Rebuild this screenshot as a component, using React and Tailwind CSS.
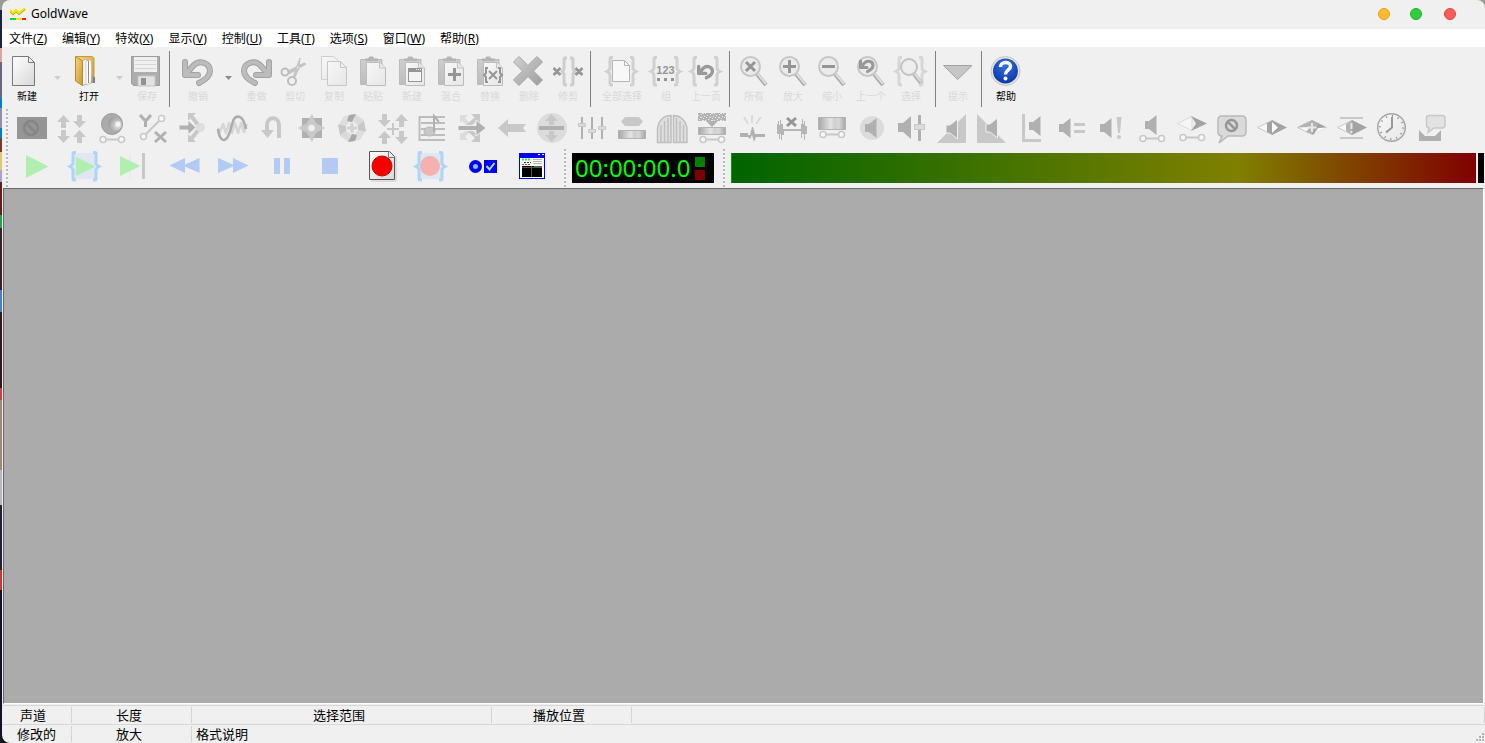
import React from "react";

const LIGHT = "#c8c8c8";
const MID = "#b0b0b0";
const DARK = "#959595";

const Icon = ({ children }) => (
  <svg width="32" height="32" viewBox="0 0 32 32" fill="none" className="shrink-0 overflow-visible" aria-hidden="true">
    {children}
  </svg>
);

// shared gradients, referenced by id from every icon
const Gradients = () => (
  <svg className="absolute w-0 h-0" aria-hidden="true">
    <defs>
      <linearGradient id="paper" x1="0" y1="0" x2="1" y2="1">
        <stop offset="0" stopColor="#fff" />
        <stop offset="1" stopColor="#d8d8d8" />
      </linearGradient>
      <linearGradient id="pale" x1="0" y1="0" x2="1" y2="1">
        <stop offset="0" stopColor="#f8f8f8" />
        <stop offset="1" stopColor="#e6e6e6" />
      </linearGradient>
      <linearGradient id="board" x1="0" y1="0" x2="0" y2="1">
        <stop offset="0" stopColor="#cecece" />
        <stop offset="1" stopColor="#bdbdbd" />
      </linearGradient>
      <linearGradient id="steel" x1="0" y1="0" x2="1" y2="0">
        <stop offset="0" stopColor="#a6a6a6" />
        <stop offset="0.45" stopColor="#e4e4e4" />
        <stop offset="0.6" stopColor="#cfcfcf" />
        <stop offset="0.75" stopColor="#d8d8d8" />
        <stop offset="1" stopColor="#a6a6a6" />
      </linearGradient>
      <linearGradient id="metal" x1="0" y1="0" x2="1" y2="1">
        <stop offset="0" stopColor="#d2d2d2" />
        <stop offset="1" stopColor="#9c9c9c" />
      </linearGradient>
      <linearGradient id="gold" x1="0" y1="0" x2="1" y2="1">
        <stop offset="0" stopColor="#f7d983" />
        <stop offset="1" stopColor="#c9952b" />
      </linearGradient>
      <radialGradient id="blue" cx="0.5" cy="0.3" r="0.8">
        <stop offset="0" stopColor="#2f70e8" />
        <stop offset="1" stopColor="#0a2f9c" />
      </radialGradient>
      <radialGradient id="ball" cx="0.7" cy="0.6" r="0.7">
        <stop offset="0" stopColor="#efefef" />
        <stop offset="0.45" stopColor="#c4c4c4" />
        <stop offset="1" stopColor="#9b9b9b" />
      </radialGradient>
      <pattern id="noise" width="9" height="7" patternUnits="userSpaceOnUse">
        <rect width="9" height="7" fill="#b4b4b4" />
        <path d="M0 1.500h1M3 0.500h1M6 1.500h2M2 3.500h1M5 2.500h1M8 4.500h1M1 5.500h1M4 5.500h2M7 6.500h1" stroke="#e8e8e8" />
      </pattern>
    </defs>
  </svg>
);

const Curl = ({ fill = "#bcbcbc", edge = "#a2a2a2" }) => (
  <g strokeLinecap="round" strokeLinejoin="round">
    <path d="M3 6V19H16M4 18L11 10C17 3 28 7 28 15C28 20 23 24 17 27" stroke={edge} strokeWidth="6" />
    <path d="M3 6V19H16M4 18L11 10C17 3 28 7 28 15C28 20 23 24 17 27" stroke={fill} strokeWidth="4" />
  </g>
);

const SmallCurl = () => <Curl fill="#9a9a9a" edge="#929292" />;

const Braces = ({ color = "#d0d0d0" }) => (
  <g stroke={color} strokeWidth="3">
    <path d="M7 1.500H5Q4 1.500 4 3V12Q4 14 1 15.500Q4 17 4 19V27Q4 29 5 29H7" />
    <path d="M24 1.500H26Q27 1.500 27 3V12Q27 14 30 15.500Q27 17 27 19V27Q27 29 26 29H24" />
  </g>
);

const Clipboard = ({ children }) => (
  <Icon>
    <path d="M3.500 3.500H25V28.500H3.500Z" fill="url(#board)" stroke="#bbb" />
    <path d="M8 5V2.500H11L12.500 0.500H16L17.500 2.500H21V5Z" fill="#b5b5b5" />
    <path d="M9.500 6.500H23L28.500 12V29.500H9.500Z" fill="url(#pale)" stroke="#bcbcbc" />
    <path d="M22.500 6.500V12H28.500" fill="#e9e9e9" stroke="#c2c2c2" />
    {children}
  </Icon>
);

const Lens = ({ children }) => (
  <Icon>
    <path d="M19 18L28 29" stroke="#a9a9a9" strokeWidth="4" />
    <path d="M19 17L28 28" stroke="#dedede" strokeWidth="2" />
    <circle cx="12.500" cy="10.500" r="9.500" fill="#ebebeb" stroke="#c6c6c6" strokeWidth="2" />
    {children}
  </Icon>
);

const Arrow = ({ x, y, deg = 0, fill = LIGHT }) => (
  <path d="M0 -6.500L6.500 0.500H2.500V6.500H-2.500V0.500H-6.500Z" transform={`translate(${x} ${y}) rotate(${deg})`} fill={fill} />
);

const Link = ({ y = 27.5, from = 7 }) => (
  <g stroke={LIGHT}>
    <path d={`M${from + 3} ${y}H22`} strokeWidth="2" />
    <circle cx={from} cy={y} r="3" fill="#f8f8f8" strokeWidth="1.500" />
    <circle cx="25.500" cy={y} r="3" fill="#f8f8f8" strokeWidth="1.500" />
  </g>
);

const Speaker = ({ x, y, fill = MID, edge = "none" }) => (
  <path d="M0 6H4L11.500 0V20L4 14H0Z" transform={`translate(${x} ${y})`} fill={fill} stroke={edge} />
);

const Ban = ({ x, y, r, color }) => (
  <g stroke={color} strokeWidth="2.500">
    <circle cx={x} cy={y} r={r} />
    <path d={`M${x - r * 0.7} ${y - r * 0.7}L${x + r * 0.7} ${y + r * 0.7}`} />
  </g>
);

const Diamond = ({ children }) => (
  <Icon>
    <path d="M1.500 15.500L16 8.500V22.500Z" fill="#f8f8f8" stroke="#c9c9c9" />
    <path d="M16 8L31 15.500L16 23Z" fill="#a3a3a3" />
    {children}
  </Icon>
);

const fileButtons = [
  {
    label: "新建",
    width: "w-[42px] ml-1",
    drop: true,
    icon: (
      <Icon>
        <path d="M1.500 0.500H17.500L23.500 6.500V29.500H1.500Z" fill="url(#paper)" stroke="#7a7a7a" />
        <path d="M17.500 0.500V6.500H23.500Z" fill="#eee" stroke="#7a7a7a" />
      </Icon>
    ),
  },
  {
    label: "打开",
    width: "w-[42px] ml-[2px]",
    drop: true,
    icon: (
      <Icon>
        <path d="M3 0.500H19L21 2V26L10 29Z" fill="url(#gold)" stroke="#c39a3c" />
        <path d="M9 5L14 3V28L9 29.500Z" fill="#f4f4f4" stroke="#999" strokeWidth="0.500" />
        <path d="M13 5L18 4Q19 15 18 27L13 29Z" fill="#fff" stroke="#aaa" strokeWidth="0.500" />
        <path d="M15.500 5V27" stroke="#8a8a8a" />
        <path d="M2.500 0.500L9.500 5V29.500L2.500 25Z" fill="url(#gold)" stroke="#b88a28" />
        <path d="M21 21V27" stroke="#4f8be0" strokeWidth="2" />
      </Icon>
    ),
  },
  {
    label: "保存",
    off: true,
    width: "w-[38px]",
    icon: (
      <Icon>
        <path d="M0.500 0.500H28.500V29.500H2.500L0.500 27.500Z" fill="#adadad" stroke="#9d9d9d" />
        <rect x="3" y="1" width="23" height="15" fill="#f0f0f0" />
        <path d="M4 4.500H25M4 8.500H25M4 12.500H25" stroke="#d5d5d5" />
        <rect x="7" y="20" width="17" height="10" fill="#e2e2e2" stroke="#c4c4c4" />
        <rect x="10" y="22" width="5" height="7" fill="#929292" />
      </Icon>
    ),
  },
];

const editButtons = [
  { label: "撤销", width: "w-10 ml-2", dropDark: true, icon: <Icon><Curl /></Icon> },
  {
    label: "重做",
    width: "w-[37px]",
    icon: (
      <Icon>
        <g transform="translate(31 0) scale(-1 1)"><Curl /></g>
      </Icon>
    ),
  },
  {
    label: "剪切",
    width: "w-[39px] pl-px",
    icon: (
      <Icon>
        <path d="M10 18L27 8L25 7L9 15ZM14 21L21 2L20 12L16 21Z" fill="#c4c4c4" stroke="#c4c4c4" />
        <circle cx="6" cy="16" r="3.500" stroke="#bdbdbd" strokeWidth="2" />
        <circle cx="13" cy="25" r="4" stroke="#bdbdbd" strokeWidth="2" />
      </Icon>
    ),
  },
  {
    label: "复制",
    width: "w-[39px] pl-px",
    icon: (
      <Icon>
        <path d="M3.500 0.500H16L21.500 6V23.500H3.500Z" fill="url(#pale)" stroke="#cecece" />
        <path d="M9.500 5.500H22.500L28.500 11.500V29.500H9.500Z" fill="url(#pale)" stroke="#c6c6c6" />
        <path d="M22.500 5.500V11.500H28.500" stroke="#c6c6c6" />
      </Icon>
    ),
  },
  { label: "粘贴", width: "w-[39px] pl-px", icon: <Clipboard /> },
  {
    label: "新建",
    width: "w-[39px] pl-px",
    icon: (
      <Clipboard>
        <rect x="12.500" y="12.500" width="13" height="13" fill="#f3f3f3" stroke={DARK} />
        <path d="M12 14H26" stroke={DARK} strokeWidth="4" />
        <path d="M20 13.500H21M22 13.500H23M24 13.500H25" stroke="#fff" />
      </Clipboard>
    ),
  },
  {
    label: "混合",
    width: "w-[39px] pl-px",
    icon: <Clipboard><path d="M13 18.500H26M19.500 12V25" stroke={DARK} strokeWidth="3" /></Clipboard>,
  },
  {
    label: "替换",
    width: "w-[39px] pl-px",
    icon: (
      <Clipboard>
        <path d="M14 12H12V17L10 19L12 21V26H14M24 12H26V17L28 19L26 21V26H24M15 15L23 23M23 15L15 23" stroke={DARK} strokeWidth="2" />
      </Clipboard>
    ),
  },
  {
    label: "删除",
    width: "w-[39px] pl-px",
    icon: (
      <Icon>
        <path d="M6 0.500L15 9.500L24 0.500L29.500 6L20.500 15L29.500 24L24 29.500L15 20.500L6 29.500L0.500 24L9.500 15L0.500 6Z" fill="url(#metal)" stroke="#a6a6a6" strokeLinejoin="round" />
      </Icon>
    ),
  },
  {
    label: "修剪",
    width: "w-[39px] pl-px",
    icon: (
      <Icon>
        <path d="M15 2H13Q12 2 12 4V12Q12 15 9 15.500Q12 16 12 19V27Q12 29 13 29H15M18 2H20Q21 2 21 4V12Q21 15 24 15.500Q21 16 21 19V27Q21 29 20 29H18" stroke="#cdcdcd" strokeWidth="3" />
        <path d="M1.500 12L8.500 19M8.500 12L1.500 19M23.500 12L30.500 19M30.500 12L23.500 19" stroke={DARK} strokeWidth="2.500" />
      </Icon>
    ),
  },
];

const selectButtons = [
  {
    label: "全部选择",
    width: "w-[54px] ml-1",
    icon: (
      <Icon>
        <Braces />
        <path d="M6.500 4.500H18.500L23.500 9.500V25.500H6.500Z" fill="#f8f8f8" stroke="#b5b5b5" />
        <path d="M18.500 4.500V9.500H23.500" stroke="#b5b5b5" />
      </Icon>
    ),
  },
  {
    label: "组",
    width: "w-[34px]",
    icon: (
      <Icon>
        <Braces />
        <text x="15.500" y="17.500" textAnchor="middle" fontSize="11" fontWeight="700" fontFamily="Liberation Sans, sans-serif" fill={DARK}>123</text>
        <path d="M7 23.500H10M14 23.500H17M21 23.500H24" stroke={DARK} strokeWidth="3" />
      </Icon>
    ),
  },
  {
    label: "上一页",
    width: "w-[46px]",
    icon: <Icon><Braces /><g transform="translate(7 7) scale(0.550)"><SmallCurl /></g></Icon>,
  },
];

const zoomButtons = [
  {
    label: "所有",
    width: "w-[39px] ml-1 pl-px",
    icon: <Lens><path d="M8 6L17 15M17 6L8 15" stroke={DARK} strokeWidth="3" /></Lens>,
  },
  {
    label: "放大",
    width: "w-[39px] pl-px",
    icon: <Lens><path d="M6 10.500H19M12.500 4V17" stroke={DARK} strokeWidth="3" /></Lens>,
  },
  {
    label: "缩小",
    width: "w-[39px] pl-px",
    icon: <Lens><path d="M6 10.500H19" stroke={DARK} strokeWidth="3" /></Lens>,
  },
  {
    label: "上一个",
    width: "w-10",
    icon: <Lens><g transform="translate(4 2) scale(0.500)"><SmallCurl /></g></Lens>,
  },
  {
    label: "选择",
    width: "w-10",
    icon: (
      <Icon>
        <Braces color="#d6d6d6" />
        <path d="M19 18L26 27" stroke="#b0b0b0" strokeWidth="4" />
        <path d="M19 17L26 26" stroke="#dedede" strokeWidth="2" />
        <circle cx="14" cy="11" r="8" fill="#eee" stroke="#c2c2c2" strokeWidth="2" />
      </Icon>
    ),
  },
];

const cueButtons = [
  {
    label: "提示",
    width: "w-[38px] mx-[3px]",
    icon: <Icon><path d="M1.500 9.500H30L15.700 23.500Z" fill="#c6c6c6" stroke="#a2a2a2" /></Icon>,
  },
];

const helpButtons = [
  {
    label: "帮助",
    on: true,
    width: "w-10 ml-1",
    icon: (
      <Icon>
        <circle cx="15.500" cy="15" r="14.500" fill="#e6e6e6" stroke="#c4c4c4" />
        <circle cx="15.500" cy="15" r="12.500" fill="url(#blue)" />
        <path d="M10.500 11C10.500 5 20.500 5 20.500 10.500C20.500 14 15.500 14 15.500 18.500" stroke="#fff" strokeWidth="3.500" />
        <circle cx="15.500" cy="22.500" r="2" fill="#fff" />
      </Icon>
    ),
  },
];

const effects = [
  ["禁用", <Icon><rect x="1" y="5" width="30" height="22" fill="#959595" /><Ban x={15} y={16} r={7} color="#868686" /></Icon>],
  ["偏移", <Icon><Arrow x={7.5} y={9.5} /><Arrow x={7.5} y={24.5} deg={180} /><Arrow x={23.5} y={9.5} deg={180} /><Arrow x={23.5} y={24.5} /></Icon>],
  ["多普勒", <Icon><circle cx="16" cy="12" r="10.500" fill="#ababab" stroke="#9b9b9b" /><circle cx="19" cy="12" r="7" fill="url(#ball)" /><circle cx="22" cy="12" r="2.500" fill="#f6f6f6" /><Link /></Icon>],
  [
    "表达式",
    <Icon>
      <path d="M10 22L23 9" stroke={LIGHT} strokeWidth="2" />
      <circle cx="25.500" cy="6.500" r="3" fill="#f8f8f8" stroke={LIGHT} strokeWidth="1.500" />
      <circle cx="7.500" cy="24.500" r="3" fill="#f8f8f8" stroke={LIGHT} strokeWidth="1.500" />
      <path d="M4 3L9.500 9L15 3M9.500 8V15M19 20L30 30M30 20L19 30" stroke={MID} strokeWidth="3" />
    </Icon>,
  ],
  [
    "回声",
    <Icon>
      <path d="M24 15L15 4M24 16L15 27" stroke={LIGHT} strokeWidth="4" />
      <path d="M12 1H20L12 9ZM12 30H20L12 22Z" fill={LIGHT} />
      <circle cx="24.500" cy="15.500" r="4.500" fill="#dedede" />
      <path d="M3 13H12V8L20 15.500L12 23V18H3Z" fill={MID} stroke="#f0f0f0" />
    </Icon>,
  ],
  [
    "滤波",
    <Icon>
      <path d="M2 16L4 20L7 12L10 21L13 11L16 21L19 11L22 21L25 11L28 20L31 12" stroke="#d6d6d6" strokeWidth="2.500" strokeLinejoin="round" />
      <path d="M2 17C3 26 7 31 11 26C17 17 15 5 22 4.500C27 5 28 10 30 17" stroke="#ababab" strokeWidth="2.500" />
    </Icon>,
  ],
  ["反转", <Icon><path d="M23 26V13C23 4 11 4 11 13V20" stroke={LIGHT} strokeWidth="4" /><path d="M5 18H18L11.500 26Z" fill={LIGHT} /></Icon>],
  [
    "机械化",
    <Icon>
      <rect x="6" y="6" width="20" height="20" fill={MID} />
      <path d="M16 2L20 11L29 16L20 21L16 30L11 21L2 16L11 11Z" fill={LIGHT} />
      <circle cx="15.500" cy="16" r="3.500" fill="#f0f0f0" stroke="#d8d8d8" />
    </Icon>,
  ],
  [
    "立体声",
    <Icon>
      {["#dedede", "#dadada", "#c8c8c8", "#dedede", "#dedede", "#dadada", "#c8c8c8", "#dedede"].map((c, i) => (
        <path key={i} d="M9 4L19 2L23 8L14 11Z" fill={c} transform={`rotate(${i * 45} 16 16)`} />
      ))}
      <path d="M13 3L20 2L16 10L11 9ZM19 29L12 30L16 22L21 23Z" fill="#a9a9a9" />
      <circle cx="16" cy="16" r="6" fill="#efefef" />
      <path d="M16 11V21M11 16H21" stroke="#d2d2d2" strokeWidth="3" />
    </Icon>,
  ],
  [
    "移动",
    <Icon>
      <Arrow x={8.5} y={8.5} deg={180} /><Arrow x={25.5} y={8.5} /><Arrow x={8.5} y={25.5} /><Arrow x={25.5} y={25.5} deg={180} />
      <path d="M17 11V23M11 17H23" stroke={LIGHT} strokeWidth="2" />
    </Icon>,
  ],
  [
    "音高",
    <Icon>
      <path d="M3.500 4V29M3 5H29M5 11H29M5 17H29M5 23H29M3 28H29" stroke="#bdbdbd" strokeWidth="2" />
      <ellipse cx="13.500" cy="19.500" rx="5.500" ry="4.500" fill={LIGHT} stroke="#b6b6b6" />
      <path d="M18 20V4L23 10" stroke={MID} strokeWidth="2" />
    </Icon>,
  ],
  [
    "混响",
    <Icon>
      <path d="M14 14L6 6M14 17L6 25" stroke="#dcdcdc" strokeWidth="4" />
      <path d="M4 3H12L4 11ZM4 28H12L4 20Z" fill="#dcdcdc" />
      <path d="M12 14L21 6M12 17L21 25" stroke={LIGHT} strokeWidth="4" />
      <path d="M15 2H24V11ZM15 30H24V21Z" fill={LIGHT} />
      <path d="M2 13.500H20V8L30 16L20 24V18.500H2Z" fill={MID} stroke="#f0f0f0" />
    </Icon>,
  ],
  ["反向", <Icon><path d="M2 16L12 7V12H30L27 16L30 20H12V25Z" fill={LIGHT} /></Icon>],
  [
    "压扩",
    <Icon>
      <circle cx="16" cy="16" r="15" fill="#dcdcdc" />
      <path d="M15.500 2L22 9H18V13H13V9H9ZM15.500 30L22 23H18V19H13V23H9Z" fill={LIGHT} />
      <rect x="3" y="14" width="25" height="4" fill={MID} />
    </Icon>,
  ],
  [
    "均衡器",
    <Icon>
      <path d="M6 5V27M16 5V27M26 5V27" stroke={MID} strokeWidth="2" />
      <path d="M2.500 11.500H9.500V14.500H2.500ZM12.500 17.500H19.500V20.500H12.500ZM22.500 14.500H29.500V17.500H22.500Z" fill="#dcdcdc" stroke={LIGHT} />
    </Icon>,
  ],
  ["降噪", <Icon><path d="M9 5H23L27 9.500L23 14H9L5 9.500Z" fill={LIGHT} /><rect x="2.500" y="18.500" width="27" height="8" fill="url(#steel)" stroke="#b4b4b4" /></Icon>],
  [
    "噪声门",
    <Icon>
      <path d="M1.500 30.500V18C1.500 10 7 3.500 15 3.500V30.500ZM17.500 30.500V3.500C25 3.500 31 10 31 18V30.500Z" fill="#e0e0e0" stroke="#bebebe" strokeWidth="1.500" />
      <path d="M5 13V30M8.500 9V30M12 6V30M20.500 6V30M24 9V30M27.500 13V30" stroke="#bebebe" strokeWidth="1.500" />
    </Icon>,
  ],
  ["平滑", <Icon><rect x="2" y="1" width="28" height="8" fill="url(#noise)" /><path d="M10 9H22L16 15Z" fill={MID} /><rect x="2.500" y="15.500" width="27" height="7" fill="url(#steel)" stroke="#b4b4b4" /><Link /></Icon>],
  [
    "爆破音",
    <Icon>
      <path d="M8 5L12 12M16 3V11M25 5L20 12" stroke="#dadada" strokeWidth="2" />
      <path d="M4 21H12V23H14L16 15H17L19 22H29V25H20L18 30L16 23L14 27L12 25H4Z" fill={MID} />
    </Icon>,
  ],
  [
    "静音削减",
    <Icon>
      <path d="M1 12H2V9H3V13H4V8H5V12H7V17H25V12H26V7H27V12H28V9H29V14H31V22H29V28H28V22H26V26H25V19H8V23H6V28H5V22H4V27H3V22H1Z" fill="#b5b5b5" />
      <path d="M11 6L20 14M20 6L11 14" stroke={DARK} strokeWidth="3" />
    </Icon>,
  ],
  ["频谱滤波", <Icon><rect x="2.500" y="5.500" width="27" height="12" fill="url(#steel)" stroke="#b4b4b4" /><Link y={22.5} /></Icon>],
  ["音量", <Icon><circle cx="16" cy="16" r="12" fill="#dcdcdc" /><Speaker x={9} y={6} /></Icon>],
  ["更改音量", <Icon><path d="M2 11H7L15 4V27L7 20H2Z" fill={MID} /><path d="M23.500 3V29" stroke={MID} strokeWidth="3" /><rect x="18.500" y="12.500" width="10" height="5" fill="#dcdcdc" stroke={LIGHT} /></Icon>],
  ["淡入", <Icon><path d="M1 31L30 2V31Z" fill={LIGHT} /><Speaker x={10} y={7} edge="#f0f0f0" /></Icon>],
  ["淡出", <Icon><path d="M1 2V31H30Z" fill={LIGHT} /><Speaker x={10} y={6} edge="#f0f0f0" /></Icon>],
  ["匹配音量", <Icon><path d="M7.500 2V28.500H25" stroke={LIGHT} strokeWidth="3" /><Speaker x={13} y={4} /></Icon>],
  ["最大化音量", <Icon><Speaker x={3} y={6} /><path d="M18 12.500H29M18 19.500H29" stroke={LIGHT} strokeWidth="3" /></Icon>],
  ["音量警告", <Icon><Speaker x={4} y={6} /><path d="M20.500 5H25.500L24 21H22Z" fill={LIGHT} /><circle cx="23" cy="25" r="2" fill={LIGHT} /></Icon>],
  ["外形音量", <Icon><Speaker x={9} y={3} /><Link y={26.5} /></Icon>],
  [
    "声像",
    <Icon>
      <path d="M1.500 11.500L16 4.500V18.500Z" fill="#f6f6f6" stroke="#dcdcdc" />
      <path d="M15 4L31 11.500L15 19L20 11.500Z" fill="#a3a3a3" />
      <Link y={25.5} />
    </Icon>,
  ],
  [
    "审查",
    <Icon>
      <path d="M6 4H26Q30 4 30 8V20Q30 24 26 24H12L3 31L6 24Q2 24 2 20V8Q2 4 6 4Z" fill="#dadada" stroke="#b9b9b9" strokeWidth="1.500" />
      <Ban x={15.5} y={13.5} r={5.5} color="#969696" />
    </Icon>,
  ],
  ["声道混合", <Diamond><path d="M11 11L17 8V23L11 20Z" fill="#a3a3a3" /><path d="M16 10L22 15.500L16 21Z" fill="#fafafa" /></Diamond>],
  ["减少人声", <Diamond><path d="M1 15.500L16 8L22 12L16 22L10 20L14 15Z" fill="#b3b3b3" /><path d="M18 22L31 15.500L22 16Z" fill="#fafafa" /><path d="M16 11V20M11.500 15.500H20.500" stroke="#e8e8e8" strokeWidth="2" /></Diamond>],
  ["立体声中置", <Diamond><path d="M4 6H27M4 26H27" stroke={LIGHT} strokeWidth="2" /><path d="M16 8V23L10 19V12Z" fill="#b3b3b3" /><path d="M15.500 11V17M15.500 19V21" stroke="#e8e8e8" strokeWidth="2" /></Diamond>],
  [
    "时间扭曲",
    <Icon>
      <circle cx="15.500" cy="15.500" r="13.800" fill="url(#pale)" stroke="#a6a6a6" strokeWidth="1.500" />
      <circle cx="15.500" cy="15.500" r="11.500" stroke="#999" strokeWidth="2" strokeDasharray="1.200 4.822" />
      <path d="M16 5V15.500L10 20.500" stroke="#999" strokeWidth="2" />
    </Icon>,
  ],
  [
    "语音转换",
    <Icon>
      <path d="M13 3.500H26Q29 3.500 29 6V13Q29 16 26 16H18L12 20.500L13 16Q10.500 16 10.500 13V6Q10.500 3.500 13 3.500Z" fill="#e2e2e2" stroke={LIGHT} strokeWidth="1.500" />
      <path d="M3 18L9 24H19L25 18V29H3Z" fill={MID} />
    </Icon>,
  ],
];

const playControls = [
  ["播放", <Icon><path d="M5 5L27.500 16.500L5 28Z" fill="#b0efb0" /></Icon>],
  [
    "播放选区",
    <Icon>
      <rect x="4" y="3" width="21" height="26" fill="#dfe7f3" />
      <g transform="translate(-1 1)"><Braces color="#aed5f5" /></g>
      <path d="M6 7L25.500 16.500L6 26Z" fill="#b0efb0" />
    </Icon>,
  ],
  ["播放到结尾", <Icon><path d="M11 4V29" stroke="#e0e6e0" /><path d="M1 6L21.500 16L1 26Z" fill="#b0efb0" /><path d="M24.500 3V29" stroke={LIGHT} strokeWidth="3" /></Icon>],
  ["快退", <Icon><path d="M1.500 15.500L17 8V14.500L31.500 8V23L17 16.500V23Z" fill="#b3caf5" /></Icon>],
  ["快进", <Icon><path d="M31.500 15.500L16 8V14.500L1 8V23L16 16.500V23Z" fill="#b3caf5" /></Icon>],
  ["暂停", <Icon><path d="M8 8H14V24H8ZM18 8H24V24H18Z" fill="#b3caf5" /></Icon>],
  ["停止", <Icon><rect x="7" y="8" width="16" height="16" fill="#b3caf5" /></Icon>],
];

const recordControls = [
  [
    "录制",
    <Icon>
      <path d="M5 31H30V6" stroke="#c8c8c8" />
      <path d="M3.500 1.500H23.500L28.500 6.500V29.500H3.500Z" fill="url(#paper)" stroke="#555" />
      <path d="M22.500 1.500V7.500H28.500" stroke="#777" />
      <circle cx="16" cy="16" r="10" fill="#f60000" stroke="#d00000" />
    </Icon>,
  ],
  [
    "录制选区",
    <Icon>
      <rect x="3" y="3" width="22" height="26" fill="#dfe7f3" />
      <g transform="translate(-1 1)"><Braces color="#aed5f5" /></g>
      <circle cx="14" cy="16" r="10" fill="#f5b0b0" />
    </Icon>,
  ],
  [
    "控制属性",
    <Icon>
      <circle cx="9.500" cy="16.500" r="4.500" stroke="#0000f0" strokeWidth="4" fill="#7fc4ff" />
      <rect x="18" y="10" width="13" height="13" fill="#0000f0" />
      <path d="M20.500 16L23.500 19.500L28.500 13" stroke="#a8dcff" strokeWidth="2" />
    </Icon>,
  ],
  [
    "控制窗口",
    <Icon>
      <rect x="3.500" y="3.500" width="25" height="25" fill="#fff" stroke="#0000f0" />
      <path d="M3 5.500H29" stroke="#0000f0" strokeWidth="5" />
      <path d="M22 4.500H24M26 4.500H28" stroke="#fff" />
      <path d="M6 9.500H14" stroke="#3fd860" strokeWidth="2" strokeDasharray="2 1" />
      <path d="M6 14.500H14" stroke="#f03030" strokeDasharray="2 1" />
      <path d="M8 12.500H15" stroke="#3030f0" strokeDasharray="2 1" />
      <path d="M17 9.500H26M17 11.500H26M17 13.500H26" stroke="#b5b5b5" />
      <path d="M6 16H26V27H6Z" fill="#000" />
      <path d="M6 17.500H26M15.500 16V27" stroke="#555" />
      <path d="M18 16.500H23" stroke="#1d8a1d" />
      <path d="M23 16.500H26" stroke="#a33" />
    </Icon>,
  ],
];

const menus = [
  ["文件", "Z"],
  ["编辑", "Y"],
  ["特效", "X"],
  ["显示", "V"],
  ["控制", "U"],
  ["工具", "T"],
  ["选项", "S"],
  ["窗口", "W"],
  ["帮助", "R"],
];

const Separator = () => <div className="w-px shrink-0 mt-1 mb-[2px] bg-[#808080]" />;

const Grip = () => (
  <div className="w-[2px] shrink-0 self-stretch bg-[repeating-linear-gradient(#b8b8b8_0_2px,#f6f6f6_2px_4px)]" />
);

const DropArrow = ({ label, width, dark }) => (
  <button aria-label={label} className={`${width} flex justify-center pt-[29px]`}>
    <svg width="7" height="4" viewBox="0 0 7 4" aria-hidden="true">
      <path d="M0 0H7L3.500 4Z" fill={dark ? "#8a8a8a" : "#cdcdcd"} />
    </svg>
  </button>
);

const ToolGroup = ({ items, enabled }) => (
  <div className="flex">
    {items.map((item, i) => {
      const on = item.on || (enabled && !item.off);
      return (
        <React.Fragment key={i}>
          <button disabled={!on} className={`${item.width} flex flex-col items-center shrink-0 pt-[9px]`}>
            {item.icon}
            <span className={`mt-px text-[10px] leading-[14px] whitespace-nowrap ${on ? "text-black" : "text-[#d9d9d9]"}`}>
              {item.label}
            </span>
          </button>
          {item.drop && <DropArrow label={`${item.label}选项`} width="w-[18px]" />}
          {item.dropDark && <DropArrow label={`${item.label}历史`} width="w-5" dark />}
        </React.Fragment>
      );
    })}
  </div>
);

const StatusCell = ({ className, children }) => (
  <div className={`${className} h-4 border-r border-[#d4d4d4] leading-4 whitespace-nowrap`}>{children}</div>
);

const App = () => {
  return (
    <div className="min-h-screen flex bg-[linear-gradient(#9c9a94_0_10px,#1d2340_10px_48px,#d8a89c_48px_62px,#6b6480_62px_98px,#0d7ac8_98px_108px,#8f8fa8_108px_128px,#0d7ac8_128px_138px,#7a3a2a_138px_152px,#e0c470_152px_170px,#a8a0d8_170px_182px,#5c2018_182px_215px,#2c9a50_215px_228px,#30242a_228px_290px,#4a80c0_290px_312px,#2a1c1c_312px_388px,#c84040_388px_400px,#a08878_400px_470px,#b8b8c0_470px_505px,#20242c_505px_570px,#c83838_570px_590px,#10141c_590px)] font-['Noto_Sans','Noto_Sans_CJK_SC',sans-serif] text-black select-none">
      <Gradients />
      <div className="flex-1 min-w-0 ml-[2px] flex flex-col bg-[#f0f0f0] rounded-t-lg rounded-bl-lg overflow-hidden">
        <header className="flex items-center h-[29px] shrink-0 pl-2 pb-[2px] pr-[29px]">
          <svg width="16" height="14" viewBox="0 0 16 14" fill="none" aria-hidden="true">
            <path d="M0 4L3 7L6 4L9 7L15 2" stroke="#b89c00" strokeWidth="2" />
            <path d="M0 3L3 6L6 3L9 6L15 1" stroke="#ffe800" strokeWidth="2" />
            <path d="M0 12H6" stroke="#00d840" strokeWidth="2" />
            <path d="M6 12H12" stroke="#ffe000" strokeWidth="2" />
            <path d="M12 12H16" stroke="#f01818" strokeWidth="2" />
          </svg>
          <h1 className="ml-[5px] text-[12px] leading-4">GoldWave</h1>
          <div className="ml-auto flex gap-5">
            <button aria-label="最小化" className="size-3 rounded-full bg-[#ffbd2e] border border-[#dfa023]" />
            <button aria-label="最大化" className="size-3 rounded-full bg-[#32cd3c] border border-[#1fae2b]" />
            <button aria-label="关闭" className="ml-[2px] size-3 rounded-full bg-[#ff5a58] border border-[#e0403e]" />
          </div>
        </header>

        <nav className="flex shrink-0 items-center gap-[15px] h-[18px] pt-[2px] pl-[7px] bg-white text-[12px] leading-4">
          {menus.map(([name, key]) => (
            <button key={name} className="whitespace-nowrap">
              {name}(<u>{key}</u>)
            </button>
          ))}
        </nav>

        <div role="toolbar" aria-label="主工具栏" className="flex h-[62px] shrink-0">
          <ToolGroup items={fileButtons} enabled />
          <div className="w-[3px]" />
          <Separator />
          <ToolGroup items={editButtons} />
          <div className="w-[3px]" />
          <Separator />
          <ToolGroup items={selectButtons} />
          <Separator />
          <ToolGroup items={zoomButtons} />
          <div className="w-[4px]" />
          <Separator />
          <ToolGroup items={cueButtons} />
          <div className="w-px" />
          <Separator />
          <ToolGroup items={helpButtons} enabled />
        </div>

        <div role="toolbar" aria-label="效果" className="flex h-10 shrink-0 items-start pl-1">
          <Grip />
          <div className="flex pl-1 pt-[3px]">
            {effects.map(([name, icon]) => (
              <button key={name} aria-label={name} disabled className="w-10 shrink-0 flex justify-center">
                {icon}
              </button>
            ))}
          </div>
        </div>

        <div role="toolbar" aria-label="播放控制" className="flex h-[39px] shrink-0 items-start pl-1">
          <Grip />
          <div className="flex pl-1 pt-px">
            {playControls.map(([name, icon]) => (
              <button key={name} aria-label={name} disabled className="w-[49px] shrink-0 pl-[9px]">
                {icon}
              </button>
            ))}
          </div>
          <div className="flex pl-[2px] pt-px">
            {recordControls.map(([name, icon]) => (
              <button key={name} aria-label={name} className="w-[50px] shrink-0 pl-[9px]">
                {icon}
              </button>
            ))}
          </div>
          <div className="ml-[7px] self-stretch flex"><Grip /></div>
          <div className="ml-[6px] mt-1 w-[142px] h-[30px] shrink-0 bg-black flex items-center pl-[3px]">
            <output className="text-[24px] leading-[30px] text-[#00ff00] font-['Noto_Sans',sans-serif]">00:00:00.0</output>
            <div className="ml-auto mr-[9px] flex flex-col gap-[3px]">
              <div className="size-[10px] bg-[#008000]" />
              <div className="size-[10px] bg-[#800000]" />
            </div>
          </div>
          <div className="ml-[9px] self-stretch flex"><Grip /></div>
          <div className="ml-[6px] mr-px mt-1 h-[30px] flex-1 flex gap-[2px]">
            <div className="flex-1 border-l border-[#00a000] bg-[linear-gradient(to_right,#006400,#808000_68%,#800000)]" />
            <div className="w-[6px] bg-black" />
          </div>
        </div>

        <main className="flex-1 ml-px mr-px bg-[#ababab] border-l border-t border-[#696969] border-r border-b border-r-white border-b-white" />

        <footer className="shrink-0 mt-px text-[13px]">
          <div className="flex items-center h-[19px] border-t border-[#d7d7d7]">
            <StatusCell className="w-[70px] pl-[18px]">声道</StatusCell>
            <StatusCell className="w-[120px] pl-11">长度</StatusCell>
            <StatusCell className="w-[300px] pl-[121px]">选择范围</StatusCell>
            <StatusCell className="w-[140px] pl-[41px]">播放位置</StatusCell>
            <StatusCell className="flex-1" />
          </div>
          <div className="relative flex items-center h-[19px] border-t border-[#d7d7d7]">
            <StatusCell className="w-[70px] pl-[15px]">修改的</StatusCell>
            <StatusCell className="w-[120px] pl-11">放大</StatusCell>
            <div className="pl-1 leading-4">格式说明</div>
            <svg className="absolute right-0 bottom-0" width="11" height="11" viewBox="0 0 11 11" aria-hidden="true">
              <path d="M8 1h2v2h-2zM8 4h2v2h-2zM5 4h2v2h-2zM8 7h2v2h-2zM5 7h2v2h-2zM2 7h2v2h-2z" fill="#b4b4b4" />
            </svg>
          </div>
        </footer>
      </div>
    </div>
  );
};

export default App;
